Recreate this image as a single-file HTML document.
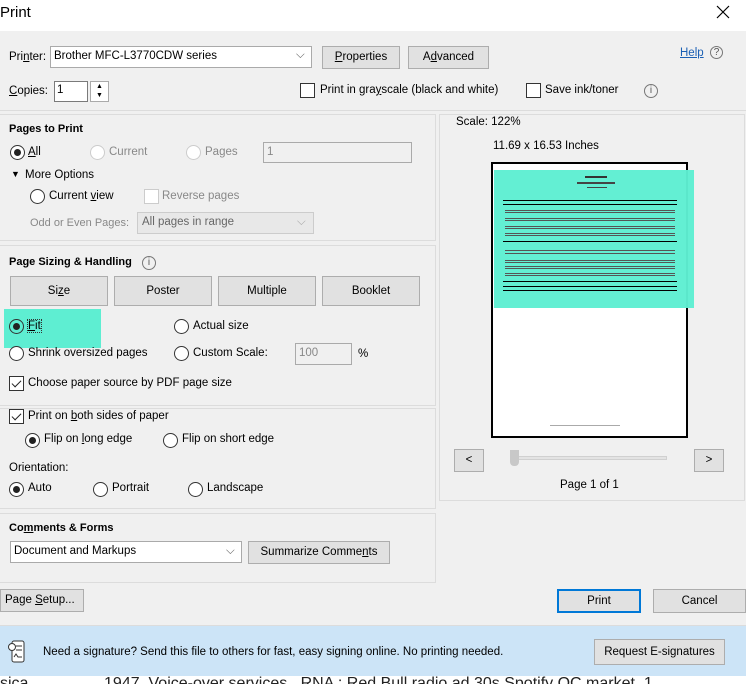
<!DOCTYPE html>
<html><head><meta charset="utf-8"><style>
*{box-sizing:border-box;margin:0;padding:0}
body{width:746px;height:684px;overflow:hidden;background:#f0f0f0;font-family:"Liberation Sans",sans-serif;font-size:11.5px;color:#000;position:relative}
.a{position:absolute;white-space:nowrap}
.btn{position:absolute;background:#e1e1e1;border:1px solid #adadad;text-align:center;font-size:11.5px}
.panel{position:absolute;border:1px solid #dcdcdc}
.rad{position:absolute;width:15px;height:15px;border:1px solid #333;border-radius:50%;background:#fff}
.rad.on::after{content:"";position:absolute;left:3px;top:3px;width:7px;height:7px;border-radius:50%;background:#222}
.rad.dis{border-color:#bbb}
.chk{position:absolute;width:15px;height:15px;border:1px solid #333;background:#fff}
.chk.on::after{content:"";position:absolute;left:4px;top:1px;width:4px;height:8px;border:solid #222;border-width:0 1.5px 1.5px 0;transform:rotate(45deg)}
.inp{position:absolute;background:#fff;border:1px solid #7a7a7a}
.dis{color:#888}
b{font-weight:bold;font-size:11px}
u{text-decoration:underline}
</style></head><body>
<div class="a" style="left:0;top:0;width:746px;height:31px;background:#fff"></div>
<div class="a" style="left:0;top:4px;font-size:15px">Print</div>
<svg class="a" style="left:716px;top:5px" width="14" height="14" viewBox="0 0 14 14"><path d="M1 1L13 13M13 1L1 13" stroke="#000" stroke-width="1.2"/></svg>

<div class="a" style="left:9px;top:51px">Pri<u>n</u>ter:</div>
<div class="inp" style="left:50px;top:46px;width:262px;height:22px;border-color:#aaa"><span class="a" style="left:3px;top:3px">Brother MFC-L3770CDW series</span><span class="a" style="left:245px;top:2px;color:#666">⌵</span></div>
<div class="btn" style="left:322px;top:46px;width:78px;height:23px;line-height:21px"><u>P</u>roperties</div>
<div class="btn" style="left:408px;top:46px;width:81px;height:23px;line-height:21px">A<u>d</u>vanced</div>
<div class="a" style="left:680px;top:47px;color:#1a5fb4"><u>Help</u></div>
<div class="a" style="left:710px;top:46px;width:13px;height:13px;border:1px solid #777;border-radius:50%;font-size:10px;text-align:center;line-height:11px;color:#555">?</div>

<div class="a" style="left:9px;top:85px"><u>C</u>opies:</div>
<div class="inp" style="left:54px;top:81px;width:34px;height:21px"><span class="a" style="left:2px;top:2px">1</span></div>
<div class="a" style="left:90px;top:81px;width:19px;height:21px;border:1px solid #aaa;background:#fff;font-size:7px;text-align:center;line-height:9px">▲<br>▼</div>
<div class="chk" style="left:300px;top:83px"></div>
<div class="a" style="left:320px;top:84px">Print in gra<u>y</u>scale (black and white)</div>
<div class="chk" style="left:526px;top:83px"></div>
<div class="a" style="left:545px;top:84px">Save ink/toner</div>
<div class="a" style="left:644px;top:84px;width:14px;height:14px;border:1px solid #777;border-radius:50%;font-size:10px;text-align:center;line-height:12px;color:#555">i</div>
<div class="a" style="left:0;top:110px;width:746px;height:1px;background:#dcdcdc"></div>

<div class="panel" style="left:-1px;top:114px;width:437px;height:127px"></div>
<div class="a" style="left:9px;top:123px"><b>Pages to Print</b></div>
<div class="rad on" style="left:10px;top:145px"></div><div class="a" style="left:28px;top:146px"><u>A</u>ll</div>
<div class="rad dis" style="left:90px;top:145px;border-color:#ccc"></div><div class="a dis" style="left:109px;top:146px">Current</div>
<div class="rad dis" style="left:186px;top:145px;border-color:#ccc"></div><div class="a dis" style="left:205px;top:146px">Pages</div>
<div class="a" style="left:263px;top:142px;width:149px;height:21px;border:1px solid #aaa;background:#f0f0f0"><span class="a dis" style="left:3px;top:3px">1</span></div>
<div class="a" style="left:11px;top:169px;font-size:9px">▼</div><div class="a" style="left:25px;top:169px">More Options</div>
<div class="rad" style="left:30px;top:189px"></div><div class="a" style="left:49px;top:190px">Current <u>v</u>iew</div>
<div class="chk" style="left:144px;top:189px;border-color:#ccc"></div><div class="a dis" style="left:162px;top:190px">Reverse pages</div>
<div class="a dis" style="left:30px;top:217px;font-size:11px">Odd or Even Pages:</div>
<div class="a" style="left:137px;top:212px;width:177px;height:22px;border:1px solid #ccc;background:#e8e8e8"><span class="a dis" style="left:4px;top:3px;color:#666">All pages in range</span><span class="a" style="left:159px;top:3px;color:#aaa">⌵</span></div>

<div class="panel" style="left:-1px;top:245px;width:437px;height:161px"></div>
<div class="a" style="left:9px;top:256px"><b>Page Sizing &amp; Handling</b></div>
<div class="a" style="left:142px;top:256px;width:14px;height:14px;border:1px solid #777;border-radius:50%;font-size:10px;text-align:center;line-height:12px;color:#555">i</div>
<div class="btn" style="left:10px;top:276px;width:98px;height:30px;line-height:28px">Si<u>z</u>e</div>
<div class="btn" style="left:114px;top:276px;width:98px;height:30px;line-height:28px">Poster</div>
<div class="btn" style="left:218px;top:276px;width:98px;height:30px;line-height:28px">Multiple</div>
<div class="btn" style="left:322px;top:276px;width:98px;height:30px;line-height:28px">Booklet</div>
<div class="a" style="left:4px;top:309px;width:97px;height:39px;background:#5eeed2"></div>
<div class="rad on" style="left:9px;top:319px;background:#5eeed2"></div><div class="a" style="left:28px;top:320px;outline:1px dotted #333"><u>F</u>it</div>
<div class="rad" style="left:174px;top:319px"></div><div class="a" style="left:193px;top:320px">Actual size</div>
<div class="rad" style="left:9px;top:346px"></div><div class="a" style="left:28px;top:347px">Shrink oversized pages</div>
<div class="rad" style="left:174px;top:346px"></div><div class="a" style="left:193px;top:347px">Custom Scale:</div>
<div class="a" style="left:295px;top:343px;width:57px;height:22px;border:1px solid #aaa;background:#f0f0f0"><span class="a dis" style="left:3px;top:3px">100</span></div>
<div class="a" style="left:358px;top:348px">%</div>
<div class="chk on" style="left:9px;top:376px"></div><div class="a" style="left:28px;top:377px">Choose paper source by PDF page size</div>

<div class="panel" style="left:-1px;top:408px;width:437px;height:101px"></div>
<div class="chk on" style="left:9px;top:409px"></div><div class="a" style="left:28px;top:410px">Print on <u>b</u>oth sides of paper</div>
<div class="rad on" style="left:25px;top:433px"></div><div class="a" style="left:44px;top:433px">Flip on <u>l</u>ong edge</div>
<div class="rad" style="left:163px;top:433px"></div><div class="a" style="left:182px;top:433px">Flip on short edge</div>
<div class="a" style="left:9px;top:462px">Orientation:</div>
<div class="rad on" style="left:9px;top:482px"></div><div class="a" style="left:28px;top:482px">Auto</div>
<div class="rad" style="left:93px;top:482px"></div><div class="a" style="left:112px;top:482px">Portrait</div>
<div class="rad" style="left:188px;top:482px"></div><div class="a" style="left:207px;top:482px">Landscape</div>

<div class="panel" style="left:-1px;top:513px;width:437px;height:70px"></div>
<div class="a" style="left:9px;top:522px"><b>Co<u>m</u>ments &amp; Forms</b></div>
<div class="inp" style="left:10px;top:541px;width:232px;height:22px;border-color:#aaa"><span class="a" style="left:3px;top:3px">Document and Markups</span><span class="a" style="left:215px;top:3px;color:#666">⌵</span></div>
<div class="btn" style="left:248px;top:541px;width:142px;height:23px;line-height:21px">Summarize Comme<u>n</u>ts</div>

<div class="panel" style="left:439px;top:114px;width:306px;height:387px"></div>
<div class="a" style="left:456px;top:116px">Scale: 122%</div>
<div class="a" style="left:493px;top:140px">11.69 x 16.53 Inches</div>
<div class="a" style="left:491px;top:162px;width:197px;height:276px;border:2px solid #000;background:#fff"></div>
<div class="a" style="left:494px;top:170px;width:200px;height:138px;background:#5eeed2;opacity:.97"></div>
<div class="a" style="left:495px;top:170px;width:190px;height:130px;font-size:3px">
<div class="a" style="left:90px;top:6px;width:22px;height:2px;background:#333"></div>
<div class="a" style="left:82px;top:12px;width:38px;height:2px;background:#444"></div>
<div class="a" style="left:92px;top:17px;width:20px;height:1px;background:#444"></div>
<div class="a" style="left:8px;top:30px;width:174px;height:1px;background:#000"></div>
<div class="a" style="left:8px;top:34px;width:174px;height:1px;background:#000"></div>
<div class="a" style="left:10px;top:40px;width:170px;height:3px;border-top:1px solid #555;border-bottom:1px solid #555"></div>
<div class="a" style="left:10px;top:48px;width:170px;height:3px;border-top:1px solid #555;border-bottom:1px solid #555"></div>
<div class="a" style="left:10px;top:56px;width:170px;height:3px;border-top:1px solid #555;border-bottom:1px solid #555"></div>
<div class="a" style="left:10px;top:63px;width:170px;height:3px;border-top:1px solid #555;border-bottom:1px solid #555"></div>
<div class="a" style="left:8px;top:71px;width:174px;height:1px;background:#000"></div>
<div class="a" style="left:10px;top:80px;width:170px;height:4px;border-top:1px solid #555;border-bottom:1px solid #555"></div>
<div class="a" style="left:10px;top:90px;width:170px;height:3px;border-top:1px solid #555;border-bottom:1px solid #555"></div>
<div class="a" style="left:10px;top:96px;width:170px;height:3px;border-top:1px solid #555;border-bottom:1px solid #555"></div>
<div class="a" style="left:10px;top:103px;width:170px;height:3px;border-top:1px solid #555;border-bottom:1px solid #555"></div>
<div class="a" style="left:8px;top:111px;width:174px;height:1px;background:#000"></div>
<div class="a" style="left:8px;top:116px;width:174px;height:1px;background:#000"></div>
<div class="a" style="left:8px;top:120px;width:174px;height:1px;background:#000"></div>
</div>
<div class="a" style="left:550px;top:425px;width:70px;height:1px;background:#aaa"></div>
<div class="btn" style="left:454px;top:449px;width:30px;height:23px;line-height:21px">&lt;</div>
<div class="btn" style="left:694px;top:449px;width:30px;height:23px;line-height:21px">&gt;</div>
<div class="a" style="left:510px;top:456px;width:157px;height:4px;background:#e3e3e3;border:1px solid #d0d0d0"></div>
<div class="a" style="left:510px;top:450px;width:9px;height:16px;background:#c8c8c8;border-radius:0 0 4px 4px"></div>
<div class="a" style="left:560px;top:479px">Page 1 of 1</div>

<div class="btn" style="left:0;top:589px;width:84px;height:23px;line-height:21px;text-align:left;padding-left:4px">Page <u>S</u>etup...</div>
<div class="btn" style="left:557px;top:589px;width:84px;height:24px;line-height:20px;border:2px solid #0078d7">Print</div>
<div class="btn" style="left:653px;top:589px;width:93px;height:24px;line-height:22px">Cancel</div>

<div class="a" style="left:0;top:625px;width:746px;height:51px;background:#cce4f7;border-top:1px solid #dcdcdc"></div>
<svg class="a" style="left:8px;top:640px" width="18" height="24" viewBox="0 0 18 24"><rect x="4" y="1" width="12" height="21" rx="2" fill="#fff" stroke="#333"/><circle cx="4" cy="7" r="3.5" fill="#fff" stroke="#333"/><path d="M8 6h6M8 10h6M6 17l2-3 2 3h4" stroke="#333" fill="none"/></svg>
<div class="a" style="left:43px;top:646px">Need a signature? Send this file to others for fast, easy signing online. No printing needed.</div>
<div class="btn" style="left:594px;top:639px;width:131px;height:26px;line-height:24px">Request E-signatures</div>
<div class="a" style="left:0;top:676px;width:746px;height:8px;background:#fff;overflow:hidden"><span class="a" style="left:0;top:-1px;font-size:16px;color:#222">sica&nbsp;&nbsp;&nbsp;&nbsp;&nbsp;&nbsp;&nbsp;&nbsp;&nbsp;&nbsp;&nbsp;&nbsp;&nbsp;&nbsp;&nbsp;&nbsp;&nbsp;1947&nbsp;&nbsp;Voice-over services&nbsp;&nbsp;&nbsp;RNA : Red Bull radio ad 30s Spotify QC market&nbsp;&nbsp;1</span></div>
</body></html>
